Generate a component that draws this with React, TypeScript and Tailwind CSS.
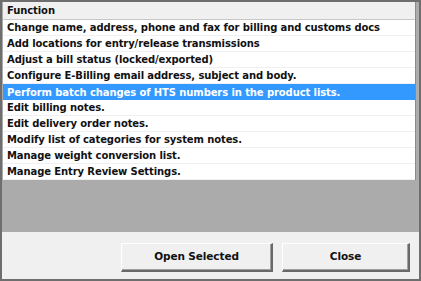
const items = [
  "Change name, address, phone and fax for billing and customs docs",
  "Add locations for entry/release transmissions",
  "Adjust a bill status (locked/exported)",
  "Configure E-Billing email address, subject and body.",
  "Perform batch changes of HTS numbers in the product lists.",
  "Edit billing notes.",
  "Edit delivery order notes.",
  "Modify list of categories for system notes.",
  "Manage weight conversion list.",
  "Manage Entry Review Settings.",
]

const selected = 4

function DialogButton({ label }: { label: string }) {
  return (
    <button className="h-[29px] bg-[#f0f0f0] border-t border-l border-t-white border-l-white border-r-2 border-b-2 border-r-[#696969] border-b-[#696969] shadow-[inset_-1px_-1px_0_#a0a0a0] text-[10.5px] font-bold text-[#111] tracking-[-0.1px]">
      {label}
    </button>
  )
}

export default function App() {
  return (
    <div
      className="w-[421px] h-[281px] bg-[#6e6e6e] p-[2px] flex flex-col"
      style={{ fontFamily: '"DejaVu Sans", sans-serif' }}
    >
      <div className="flex-1 flex flex-col bg-[#f0f0f0]">
        <div className="h-[178px] flex flex-col bg-[#ababab] pr-[3px] pl-[1px]">
          <div className="bg-white border-r border-[#8a8a8a]">
            <div className="h-[18px] bg-[#f0f0f0] border-b border-[#c8c8c8] flex items-center px-[4px] text-[10px] font-bold text-[#111] tracking-[-0.1px]">
              Function
            </div>
            {items.map((t, i) => (
              <div
                key={i}
                className={
                  i === selected
                    ? "h-[16px] bg-[#3399ff] text-white flex items-center px-[4px] text-[10px] font-bold whitespace-nowrap tracking-[-0.1px]"
                    : "h-[16px] border-b border-[#f0f0f0] text-[#111] flex items-center px-[4px] text-[10px] font-bold whitespace-nowrap tracking-[-0.1px]"
                }
              >
                {t}
              </div>
            ))}
          </div>
        </div>
        <div className="h-[52px] bg-[#ababab]" />
        <div className="flex-1 flex items-center justify-end gap-[9px] pr-[9px] pt-[3px]">
          <div className="w-[152px] flex flex-col">
            <DialogButton label="Open Selected" />
          </div>
          <div className="w-[128px] flex flex-col">
            <DialogButton label="Close" />
          </div>
        </div>
      </div>
    </div>
  )
}
